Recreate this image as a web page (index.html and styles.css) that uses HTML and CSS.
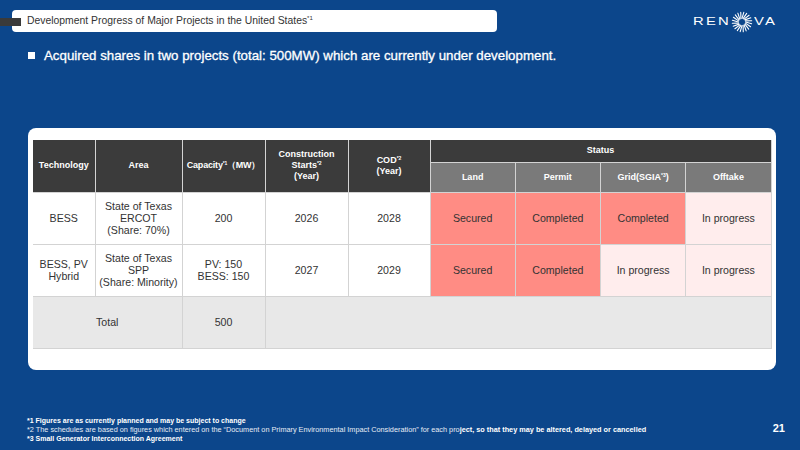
FILE: index.html
```html
<!DOCTYPE html>
<html lang="en">
<head>
<meta charset="utf-8">
<title>Development Progress of Major Projects in the United States</title>
<link rel="stylesheet" href="styles.css">
</head>
<body>
<div class="slide">
  <span class="marker"></span>
  <header class="top">
    <div class="title-box">Development Progress of Major Projects in the United States<sup>*1</sup></div>
    <div class="logo">
      <span class="lt lt-a">REN</span>
      <svg class="sun" width="22" height="22" viewBox="0 0 22 22" aria-hidden="true">
        <defs>
          <line id="ray" x1="14.6" y1="11" x2="20.6" y2="12.8" stroke="#fff" stroke-width="1.1" stroke-linecap="round"/>
        </defs>
        <use href="#ray"/>
        <use href="#ray" transform="rotate(18 11 11)"/>
        <use href="#ray" transform="rotate(36 11 11)"/>
        <use href="#ray" transform="rotate(54 11 11)"/>
        <use href="#ray" transform="rotate(72 11 11)"/>
        <use href="#ray" transform="rotate(90 11 11)"/>
        <use href="#ray" transform="rotate(108 11 11)"/>
        <use href="#ray" transform="rotate(126 11 11)"/>
        <use href="#ray" transform="rotate(144 11 11)"/>
        <use href="#ray" transform="rotate(162 11 11)"/>
        <use href="#ray" transform="rotate(180 11 11)"/>
        <use href="#ray" transform="rotate(198 11 11)"/>
        <use href="#ray" transform="rotate(216 11 11)"/>
        <use href="#ray" transform="rotate(234 11 11)"/>
        <use href="#ray" transform="rotate(252 11 11)"/>
        <use href="#ray" transform="rotate(270 11 11)"/>
        <use href="#ray" transform="rotate(288 11 11)"/>
        <use href="#ray" transform="rotate(306 11 11)"/>
        <use href="#ray" transform="rotate(324 11 11)"/>
        <use href="#ray" transform="rotate(342 11 11)"/>
      </svg>
      <span class="lt lt-b">VA</span>
    </div>
  </header>

  <p class="lead"><span class="sq"></span>Acquired shares in two projects (total: 500MW) which are currently under development.</p>

  <div class="card">
    <table class="grid">
      <colgroup>
        <col class="c-tech"><col class="c-area"><col class="c-cap"><col class="c-cs"><col class="c-cod">
        <col class="c-st"><col class="c-st"><col class="c-st"><col class="c-st">
      </colgroup>
      <thead>
        <tr class="h1">
          <th rowspan="2">Technology</th>
          <th rowspan="2">Area</th>
          <th rowspan="2" class="cap">Capacity<sup>*1</sup>（MW）</th>
          <th rowspan="2">Construction<br>Starts<sup>*2</sup><br>(Year)</th>
          <th rowspan="2">COD<sup>*2</sup><br>(Year)</th>
          <th colspan="4" class="status">Status</th>
        </tr>
        <tr class="h2">
          <th>Land</th>
          <th>Permit</th>
          <th>Grid(SGIA<sup>*3</sup>)</th>
          <th>Offtake</th>
        </tr>
      </thead>
      <tbody>
        <tr>
          <td>BESS</td>
          <td>State of Texas<br>ERCOT<br>(Share: 70%)</td>
          <td>200</td>
          <td>2026</td>
          <td>2028</td>
          <td class="done">Secured</td>
          <td class="done">Completed</td>
          <td class="done">Completed</td>
          <td class="prog">In progress</td>
        </tr>
        <tr>
          <td>BESS, PV<br>Hybrid</td>
          <td>State of Texas<br>SPP<br>(Share: Minority)</td>
          <td>PV: 150<br>BESS: 150</td>
          <td>2027</td>
          <td>2029</td>
          <td class="done">Secured</td>
          <td class="done">Completed</td>
          <td class="prog">In progress</td>
          <td class="prog">In progress</td>
        </tr>
        <tr class="total">
          <td colspan="2">Total</td>
          <td>500</td>
          <td colspan="6"></td>
        </tr>
      </tbody>
    </table>
  </div>

  <footer class="foot">
    <div class="notes">
      <p>*1 Figures are as currently planned and may be subject to change</p>
      <p class="wide"><span class="thin">*2 The schedules are based on figures which entered on the “Document on Primary Environmental Impact Consideration” for each pro</span>ject, so that they may be altered, delayed or cancelled</p>
      <p>*3 Small Generator Interconnection Agreement</p>
    </div>
    <div class="page">21</div>
  </footer>
</div>
</body>
</html>
```

FILE: styles.css
```css
* { box-sizing: border-box; }

html, body {
  margin: 0;
  padding: 0;
}

body {
  background: #0c468b;
  font-family: "Liberation Sans", Arial, sans-serif;
}

.slide {
  position: relative;
  width: 800px;
  height: 450px;
  background: #0c468b;
  display: flex;
  flex-direction: column;
  overflow: hidden;
}

.marker {
  position: absolute;
  left: 0;
  top: 18px;
  width: 21px;
  height: 8px;
  background: #3a3a3a;
}

.top {
  display: flex;
  align-items: flex-start;
  justify-content: space-between;
  padding: 10px 22px 0 12px;
}

.title-box {
  width: 485px;
  height: 22px;
  background: #fff;
  border-radius: 4px;
  padding-left: 15px;
  font-size: 10.4px;
  line-height: 22px;
  color: #333;
  white-space: nowrap;
}

.title-box sup {
  font-size: 6px;
  vertical-align: 4px;
  line-height: 0;
}

.logo {
  display: flex;
  align-items: center;
  color: #fff;
  font-size: 11px;
  height: 22px;
  width: 85px;
}

.logo .lt {
  display: inline-block;
  letter-spacing: 1.6px;
  transform: scaleX(1.35);
  transform-origin: left center;
  line-height: 22px;
}

.logo .lt-a { margin-right: 10px; }
.logo .lt-b { margin-left: 1px; }

.logo .sun {
  display: block;
  flex: none;
  margin-top: 1px;
}

.lead {
  margin: 15px 0 0 28px;
  display: flex;
  align-items: center;
  height: 16px;
  color: #fff;
  font-size: 13.3px;
  font-weight: normal;
  -webkit-text-stroke: 0.3px #fff;
  white-space: nowrap;
}

.lead .sq {
  width: 7px;
  height: 7px;
  background: #fff;
  margin-right: 9px;
  flex: none;
}

.card {
  margin: 65px 0 0 28px;
  width: 748px;
  height: 242px;
  background: #fff;
  border-radius: 8px;
  padding: 12px 5px 0 5px;
}

.grid {
  width: 738px;
  table-layout: fixed;
  border-collapse: collapse;
  text-align: center;
}

.c-tech { width: 62px; }
.c-area { width: 87px; }
.c-cap { width: 83px; }
.c-cs { width: 83px; }
.c-cod { width: 82px; }
.c-st { width: 85.25px; }

.grid th,
.grid td {
  border: 1px solid #d3d3d3;
  padding: 0;
  vertical-align: middle;
}

.grid th {
  color: #fff;
  font-size: 9px;
  font-weight: bold;
  line-height: 11px;
  background: #3b3b3b;
}

.grid th sup,
.grid td sup {
  font-size: 5px;
  vertical-align: 3px;
  line-height: 0;
}

.grid .h1 th { height: 22px; }
.grid .h2 th {
  height: 30px;
  background: #7a7a7a;
}
.grid .cap { white-space: nowrap; letter-spacing: -0.2px; }

.grid td {
  height: 52px;
  font-size: 10.6px;
  line-height: 12px;
  color: #333;
}

.grid td.done { background: #ff8c84; }
.grid td.prog { background: #ffeded; }

.grid .total td {
  background: #e8e8e8;
  height: 52px;
}

.grid tr:first-child th { border-top: none; }
.grid tr th:first-child,
.grid tr td:first-child { border-left: none; }

.foot {
  margin-top: 46px;
  display: flex;
  justify-content: space-between;
  align-items: flex-start;
  padding: 0 15px 0 27px;
}

.notes p {
  margin: 0;
  font-size: 7px;
  line-height: 9px;
  font-weight: bold;
  color: #fff;
  white-space: nowrap;
}

.notes p.wide {
  font-size: 7.3px;
}

.notes .thin {
  font-weight: normal;
  color: #e6ecf5;
}

.page {
  margin-top: 6px;
  font-size: 11px;
  font-weight: bold;
  color: #fff;
}
```
